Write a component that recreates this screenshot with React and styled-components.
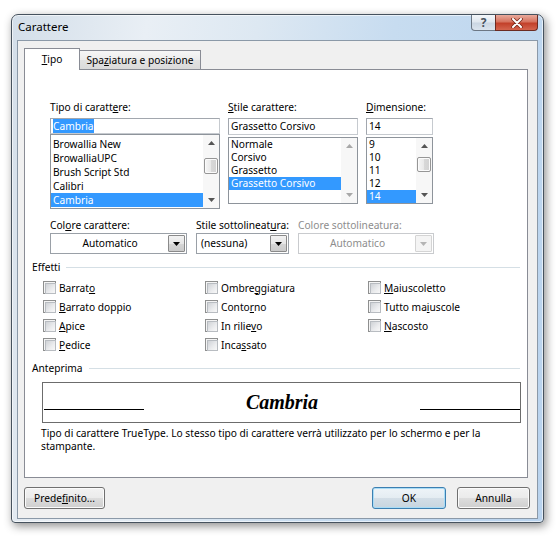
import React from 'react';
import styled, { createGlobalStyle } from 'styled-components';

const GlobalStyle = createGlobalStyle`
  html, body {
    margin: 0;
    padding: 0;
    background: #fff;
  }
  body {
    font-family: "Noto Sans", "Open Sans", sans-serif;
    font-size: 10.2px;
    color: #000;
  }
  * {
    box-sizing: border-box;
  }
`;

const Page = styled.div`
  width: 558px;
  height: 540px;
  padding: 14px 0 0 11px;
  background: #fff;
  overflow: hidden;
`;

const Window = styled.div`
  width: 533px;
  height: 509px;
  border: 1px solid #46525e;
  border-radius: 7px 7px 4px 4px;
  background: linear-gradient(100deg, #d3dee9 0%, #e9eff5 22%, #dde8f2 40%, #c7dcf0 62%, #b9d3ee 100%);
  box-shadow: 2px 3px 10px rgba(0, 0, 0, 0.45), inset 0 0 0 1px rgba(255, 255, 255, 0.6);
  display: flex;
  flex-direction: column;
`;

const TitleBar = styled.div`
  height: 25px;
  display: flex;
  justify-content: space-between;
  align-items: flex-start;
  padding: 0 5px 0 6px;
`;

const Title = styled.div`
  font-size: 11.5px;
  line-height: 24px;
`;

const CaptionButtons = styled.div`
  display: flex;
`;

const CaptionButton = styled.div`
  width: ${p => p.w}px;
  height: 16px;
  display: flex;
  align-items: center;
  justify-content: center;
  border: 1px solid ${p => (p.close ? '#6b2b22' : '#6c7784')};
  border-top: none;
  background: ${p =>
    p.close
      ? 'linear-gradient(#e9aa9c, #d6735f 45%, #c2402a 55%, #d4654e)'
      : 'linear-gradient(#f3f6f9, #e0e7ef 45%, #cbd6e2 55%, #dbe4ee)'};
  border-radius: ${p => (p.close ? '0 0 4px 0' : '0 0 0 4px')};
  margin-left: ${p => (p.close ? '-1px' : '0')};
  color: #4a525c;
  font-size: 12px;
  font-weight: bold;
`;

const Client = styled.div`
  margin: 0 5px 3px 5px;
  flex: 1;
  background: #f0f0f0;
  border: 1px solid #8b99a8;
  padding: 7px 8px 0 6px;
  display: flex;
  flex-direction: column;
`;

const TabStrip = styled.div`
  display: flex;
  align-items: flex-end;
  height: 21px;
`;

const Tab = styled.div`
  position: relative;
  z-index: ${p => (p.active ? 1 : 0)};
  width: ${p => p.w}px;
  height: ${p => (p.active ? 22 : 19)}px;
  margin-bottom: ${p => (p.active ? -1 : 0)}px;
  margin-left: ${p => (p.active ? 0 : -1)}px;
  border: 1px solid #898c95;
  border-bottom: none;
  background: ${p => (p.active ? '#fff' : 'linear-gradient(#f6f6f6, #ececec 50%, #e2e2e2 50%, #dadada)')};
  text-align: center;
  white-space: nowrap;
  line-height: ${p => (p.active ? 20 : 19)}px;
`;

const Panel = styled.div`
  width: 504px;
  height: 409px;
  border: 1px solid #898c95;
  background: #fff;
  padding-top: 30px;
`;

const FontRow = styled.div`
  display: flex;
  gap: 8px;
  margin-left: 25px;
  align-items: flex-start;
`;

const Field = styled.div`
  width: ${p => p.w}px;
  display: flex;
  flex-direction: column;
`;

const FieldLabel = styled.div`
  height: 14px;
  line-height: 14px;
  margin-bottom: ${p => (p.tight ? 1 : 4)}px;
  white-space: nowrap;
  color: ${p => (p.disabled ? '#8d8d8d' : '#000')};
`;

const TextBox = styled.div`
  height: ${p => p.h}px;
  border: 1px solid #a2a7ae;
  border-right-color: #c6cacf;
  border-bottom-color: #c6cacf;
  padding-left: 2px;
  line-height: ${p => p.h - 2}px;
  white-space: nowrap;
`;

const Selection = styled.span`
  background: #3399ff;
  color: #fff;
`;

const ListBox = styled.div`
  margin-top: ${p => p.gap}px;
  height: ${p => p.h}px;
  border: 1px solid #8e949b;
  display: flex;
  overflow: hidden;
`;

const Items = styled.div`
  flex: 1;
  padding-top: ${p => p.pad}px;
  overflow: hidden;
`;

const Item = styled.div`
  height: ${p => p.row}px;
  line-height: ${p => p.row}px;
  padding-left: 2px;
  white-space: nowrap;
  background: ${p => (p.selected ? '#3399ff' : 'transparent')};
  color: ${p => (p.selected ? '#fff' : '#000')};
`;

const ScrollBar = styled.div`
  width: 16px;
  display: flex;
  flex-direction: column;
  background: #f7f7f7;
`;

const ScrollArrow = styled.div`
  height: 16px;
  display: flex;
  align-items: center;
  justify-content: center;
`;

const Track = styled.div`
  flex: 1;
  padding: 0 1px;
`;

const Thumb = styled.div`
  margin-top: ${p => p.top}px;
  height: ${p => p.h}px;
  border: 1px solid #969696;
  border-radius: 2px;
  background: linear-gradient(90deg, #f6f6f6, #e8e8e8 50%, #d8d8d8 50%, #d2d2d2);
  box-shadow: inset 0 0 0 1px #fbfbfb;
`;

const ComboRow = styled.div`
  display: flex;
  gap: 9px;
  margin: 9px 0 0 25px;
`;

const ComboBox = styled.div`
  height: 21px;
  border: 1px solid ${p => (p.disabled ? '#c9cbce' : '#9aa0a7')};
  background: #fff;
  display: flex;
  padding: 1px;
`;

const ComboText = styled.div`
  flex: 1;
  line-height: 17px;
  padding-left: ${p => (p.center ? 0 : 3)}px;
  text-align: ${p => (p.center ? 'center' : 'left')};
  color: ${p => (p.disabled ? '#8d8d8d' : '#000')};
`;

const DropButton = styled.div`
  width: 17px;
  border: 1px solid ${p => (p.disabled ? '#d4d4d4' : '#8a8a8a')};
  border-radius: 1px;
  background: ${p =>
    p.disabled ? '#f4f4f4' : 'linear-gradient(#f2f2f2, #e6e6e6 50%, #d6d6d6 50%, #cbcbcb)'};
  display: flex;
  align-items: center;
  justify-content: center;
`;

const GroupHeader = styled.div`
  display: flex;
  align-items: center;
  height: 14px;
  line-height: 14px;
  margin: ${p => p.top}px 7px 0 7px;
`;

const GroupLine = styled.div`
  flex: 1;
  height: 1px;
  margin-left: 6px;
  background: #d5dfe5;
`;

const CheckGrid = styled.div`
  display: grid;
  grid-template-columns: 162px 163px 1fr;
  grid-template-rows: repeat(4, 19px);
  grid-auto-flow: column;
  margin: 4px 0 0 18px;
`;

const CheckItem = styled.div`
  display: flex;
  align-items: center;
  gap: 3px;
`;

const CheckBox = styled.div`
  width: 13px;
  height: 13px;
  border: 1px solid #8e8f8f;
  background: #f4f4f4;
  padding: 1px;

  &::after {
    content: '';
    display: block;
    width: 100%;
    height: 100%;
    border: 1px solid #b8bcc1;
    background: linear-gradient(135deg, #cfd2d6, #ebecee 60%, #f8f8f8);
  }
`;

const Preview = styled.div`
  margin: 7px 6px 0 17px;
  height: 41px;
  border: 1px solid #6c6c6c;
  display: flex;
  align-items: center;
  justify-content: space-between;
`;

const Rule = styled.div`
  width: 100px;
  height: 1px;
  background: #000;
  align-self: flex-start;
  margin-top: 26px;
  margin-left: ${p => (p.left ? 1 : 0)}px;
`;

const PreviewText = styled.div`
  font-family: "Liberation Serif", serif;
  font-weight: bold;
  font-style: italic;
  font-size: 20px;
`;

const Description = styled.div`
  margin: 4px 0 0 16px;
  line-height: 13px;
  white-space: nowrap;
`;

const ButtonRow = styled.div`
  display: flex;
  width: 506px;
  margin-top: 9px;
`;

const Button = styled.div`
  width: ${p => p.w}px;
  height: 22px;
  margin-left: ${p => p.ml || 0};
  border: 1px solid ${p => (p.primary ? '#3c7fb1' : '#707070')};
  border-radius: 3px;
  background: ${p =>
    p.primary
      ? 'linear-gradient(#eef4f8, #e4ecf2 50%, #d3dee7 50%, #c8d5df)'
      : 'linear-gradient(#f2f2f2, #ebebeb 50%, #dddddd 50%, #cfcfcf)'};
  box-shadow: inset 0 0 0 1px ${p => (p.primary ? '#a9dcf6' : '#fbfbfb')};
  text-align: center;
  line-height: 20px;
`;

const Arrow = ({ up, color = '#000' }) => (
  <svg width="7" height="4" viewBox="0 0 7 4">
    <path d={up ? 'M0 4 L3.5 0 L7 4 Z' : 'M0 0 L7 0 L3.5 4 Z'} fill={color} />
  </svg>
);

const Scroller = ({ thumb, color }) => (
  <ScrollBar>
    <ScrollArrow>
      <Arrow up color={color} />
    </ScrollArrow>
    <Track>{thumb && <Thumb top={thumb.top} h={thumb.h} />}</Track>
    <ScrollArrow>
      <Arrow color={color} />
    </ScrollArrow>
  </ScrollBar>
);

const CloseGlyph = () => (
  <svg width="12" height="10" viewBox="0 0 12 10">
    <path d="M2 1 L10 9 M10 1 L2 9" stroke="#7a2a1c" strokeWidth="3.6" strokeLinecap="round" />
    <path d="M2 1 L10 9 M10 1 L2 9" stroke="#fff" strokeWidth="2" strokeLinecap="round" />
  </svg>
);

const fonts = ['Browallia New', 'BrowalliaUPC', 'Brush Script Std', 'Calibri', 'Cambria'];
const styles = ['Normale', 'Corsivo', 'Grassetto', 'Grassetto Corsivo'];
const sizes = ['9', '10', '11', '12', '14'];

const effects = [
  <>Barrat<u>o</u></>,
  <><u>B</u>arrato doppio</>,
  <><u>A</u>pice</>,
  <><u>P</u>edice</>,
  <>Ombre<u>g</u>giatura</>,
  <>Conto<u>r</u>no</>,
  <>In rilie<u>v</u>o</>,
  <>Inca<u>s</u>sato</>,
  <><u>M</u>aiuscoletto</>,
  <>Tutto ma<u>i</u>uscole</>,
  <><u>N</u>ascosto</>,
];

export default function App() {
  return (
    <Page>
      <GlobalStyle />
      <Window>
        <TitleBar>
          <Title>Carattere</Title>
          <CaptionButtons>
            <CaptionButton w={25}>?</CaptionButton>
            <CaptionButton w={43} close>
              <CloseGlyph />
            </CaptionButton>
          </CaptionButtons>
        </TitleBar>
        <Client>
          <TabStrip>
            <Tab active w={56}>
              <u>T</u>ipo
            </Tab>
            <Tab w={122}>
              Spa<u>z</u>iatura e posizione
            </Tab>
          </TabStrip>
          <Panel>
            <FontRow>
              <Field w={170}>
                <FieldLabel>
                  Tipo di caratt<u>e</u>re:
                </FieldLabel>
                <TextBox h={16}>
                  <Selection>Cambria</Selection>
                </TextBox>
                <ListBox gap={0} h={75}>
                  <Items pad={2}>
                    {fonts.map(f => (
                      <Item key={f} row={14} selected={f === 'Cambria'}>
                        {f}
                      </Item>
                    ))}
                  </Items>
                  <Scroller color="#555" thumb={{ top: 7, h: 16 }} />
                </ListBox>
              </Field>
              <Field w={130}>
                <FieldLabel>
                  <u>S</u>tile carattere:
                </FieldLabel>
                <TextBox h={17}>Grassetto Corsivo</TextBox>
                <ListBox gap={2} h={67}>
                  <Items pad={0}>
                    {styles.map(s => (
                      <Item key={s} row={13} selected={s === 'Grassetto Corsivo'}>
                        {s}
                      </Item>
                    ))}
                  </Items>
                  <Scroller color="#a8a8a8" />
                </ListBox>
              </Field>
              <Field w={67}>
                <FieldLabel>
                  <u>D</u>imensione:
                </FieldLabel>
                <TextBox h={17}>14</TextBox>
                <ListBox gap={2} h={67}>
                  <Items pad={0}>
                    {sizes.map(s => (
                      <Item key={s} row={13} selected={s === '14'}>
                        {s}
                      </Item>
                    ))}
                  </Items>
                  <Scroller color="#555" thumb={{ top: 3, h: 15 }} />
                </ListBox>
              </Field>
            </FontRow>

            <ComboRow>
              <Field w={137}>
                <FieldLabel tight>
                  Col<u>o</u>re carattere:
                </FieldLabel>
                <ComboBox>
                  <ComboText center>Automatico</ComboText>
                  <DropButton>
                    <Arrow />
                  </DropButton>
                </ComboBox>
              </Field>
              <Field w={93}>
                <FieldLabel tight>
                  Stile sottolineat<u>u</u>ra:
                </FieldLabel>
                <ComboBox>
                  <ComboText>(nessuna)</ComboText>
                  <DropButton>
                    <Arrow />
                  </DropButton>
                </ComboBox>
              </Field>
              <Field w={136}>
                <FieldLabel tight disabled>
                  Colore sottolineatura:
                </FieldLabel>
                <ComboBox disabled>
                  <ComboText center disabled>
                    Automatico
                  </ComboText>
                  <DropButton disabled>
                    <Arrow color="#b4b4b4" />
                  </DropButton>
                </ComboBox>
              </Field>
            </ComboRow>

            <GroupHeader top={6}>
              Effetti
              <GroupLine />
            </GroupHeader>
            <CheckGrid>
              {effects.map((label, i) => (
                <CheckItem key={i}>
                  <CheckBox />
                  <span>{label}</span>
                </CheckItem>
              ))}
            </CheckGrid>

            <GroupHeader top={7}>
              Anteprima
              <GroupLine />
            </GroupHeader>
            <Preview>
              <Rule left />
              <PreviewText>Cambria</PreviewText>
              <Rule />
            </Preview>
            <Description>
              Tipo di carattere TrueType. Lo stesso tipo di carattere verrà utilizzato per lo schermo e per la
              <br />
              stampante.
            </Description>
          </Panel>
          <ButtonRow>
            <Button w={81}>
              Prede<u>f</u>inito...
            </Button>
            <Button w={74} ml="auto" primary>
              OK
            </Button>
            <Button w={73} ml="11px">
              Annulla
            </Button>
          </ButtonRow>
        </Client>
      </Window>
    </Page>
  );
}
